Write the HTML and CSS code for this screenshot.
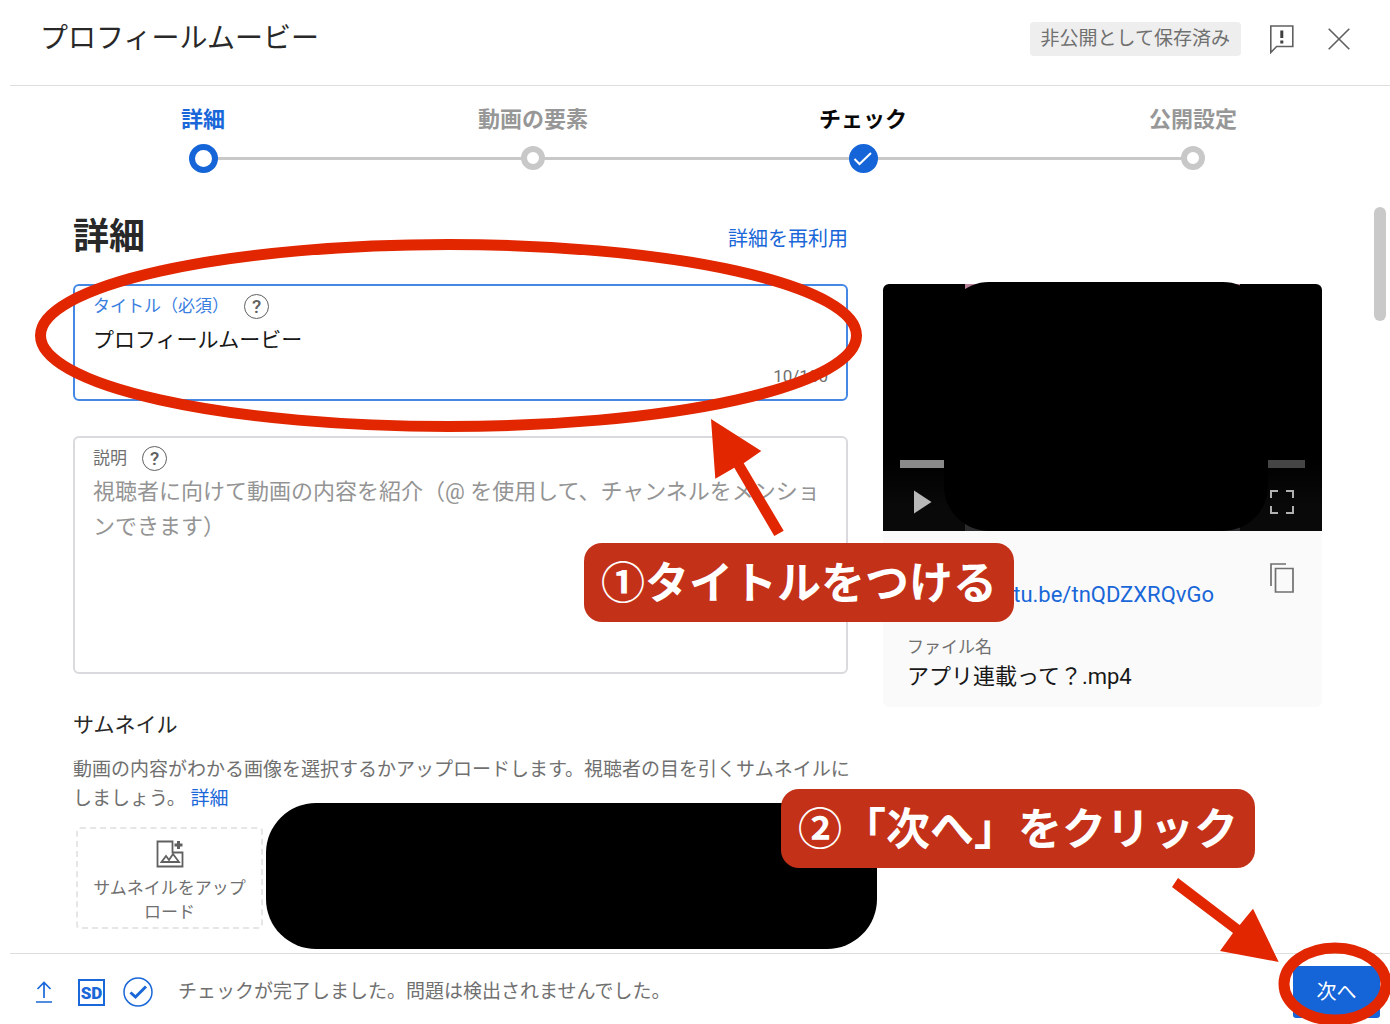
FILE: index.html
```html
<!DOCTYPE html>
<html lang="ja">
<head>
<meta charset="utf-8">
<meta name="viewport" content="width=device-width, initial-scale=1">
<title>プロフィールムービー</title>
<link rel="stylesheet" href="styles.css">
</head>
<body>
<div class="dialog">
  <header class="header">
    <h1 class="header-title">プロフィールムービー</h1>
    <span class="saved">非公開として保存済み</span>
    <button class="icon-btn" aria-label="フィードバックを送信">
      <svg width="26" height="30" viewBox="0 0 26 30" fill="none" stroke="#606060" stroke-width="1.6"><path d="M1.800 2h22v20.500h-16.200l-5.800 6z"/><path d="M12.800 6.500v7.500M12.800 16.500v3" stroke="#404040" stroke-width="3"/></svg>
    </button>
    <button class="icon-btn" aria-label="閉じる">
      <svg width="22" height="22" viewBox="0 0 22 22" fill="none" stroke="#606060" stroke-width="1.600"><path d="M.7.7l20.600 20.600M21.300.7L.7 21.300"/></svg>
    </button>
  </header>

  <nav class="steps" aria-label="手順">
    <button class="step step-active"><span>詳細</span><i class="dot"></i></button>
    <button class="step"><span>動画の要素</span><i class="dot"></i></button>
    <button class="step step-done"><span>チェック</span><i class="dot"><svg width="20" height="16" viewBox="0 0 20 16" fill="none" stroke="#fff" stroke-width="2"><path d="M1.500 8l5 5L18 2"/></svg></i></button>
    <button class="step"><span>公開設定</span><i class="dot"></i></button>
  </nav>

  <main class="body">
    <section class="main-col">
      <div class="heading">
        <h2>詳細</h2>
        <button class="reuse">詳細を再利用</button>
      </div>

      <div class="field field-title">
        <div class="field-label"><label for="title">タイトル（必須）</label><button class="help" aria-label="タイトルのヘルプ">?</button></div>
        <input id="title" class="field-input" type="text" value="プロフィールムービー" maxlength="100">
        <div class="counter">10/100</div>
        <svg class="mark mark-title" viewBox="0 0 827 193" preserveAspectRatio="none"><ellipse cx="413.500" cy="96.500" rx="408" ry="91"/></svg>
      </div>

      <div class="field field-desc">
        <div class="field-label"><label for="desc">説明</label><button class="help" aria-label="説明のヘルプ">?</button></div>
        <textarea id="desc" class="field-input" rows="5" placeholder="視聴者に向けて動画の内容を紹介（@ を使用して、チャンネルをメンションできます）"></textarea>
        <svg class="arrow arrow-title" width="74" height="118" viewBox="0 0 74 118"><path d="M0 0L50.300 32L32.700 44.300L72.700 111.700L63.300 117L23.300 48.700L4.300 59.700z"/></svg>
        <div class="callout callout-title">①タイトルをつける</div>
      </div>

      <h3 class="thumb-title">サムネイル</h3>
      <p class="thumb-text">動画の内容がわかる画像を選択するかアップロードします。視聴者の目を引くサムネイルに<br>しましょう。 <a href="#">詳細</a></p>
      <div class="thumbs">
        <button class="upload">
          <svg width="28" height="28" viewBox="0 0 28 28" fill="none" stroke="#606060" stroke-width="1.800"><path d="M16.500 1.500H1.500v25h25V12.500H16.500z"/><path d="M5.500 22l4.500-6 3 4 4-6 6 8z"/><path d="M22.500 1v8M18.500 5h8" stroke-width="3"/></svg>
          <span>サムネイルをアップロード</span>
        </button>
        <div class="cover cover-thumbs"></div>
        <div class="callout callout-next">②「次へ」をクリック</div>
      </div>
    </section>

    <aside class="preview">
      <div class="player">
        <div class="frame"></div>
        <div class="cover cover-player"></div>
        <div class="controls">
          <div class="track"><i class="played"></i><i class="rest"></i></div>
          <div class="buttons">
            <button class="ctl" aria-label="再生"><svg width="18" height="24" viewBox="0 0 18 24"><path d="M0 .5v23L17.500 12z" fill="#b8b8b8"/></svg></button>
            <button class="ctl" aria-label="全画面"><svg width="24" height="24" viewBox="0 0 24 24" fill="none" stroke="#b0b0b0" stroke-width="2"><path d="M1 8V1h7M16 1h7v7M23 16v7h-7M8 23H1v-7"/></svg></button>
          </div>
        </div>
      </div>
      <div class="info">
        <div class="link-row">
          <a href="#">https://youtu.be/tnQDZXRQvGo</a>
          <button class="ctl" aria-label="リンクをコピー"><svg width="24" height="30" viewBox="0 0 24 30" fill="none" stroke="#707070" stroke-width="1.700"><path d="M16 1H1v22"/><path d="M5.500 5.500h17.500v23.500H5.500z"/></svg></button>
        </div>
        <div class="file-label">ファイル名</div>
        <div class="file-name">アプリ連載って？.mp4</div>
      </div>
    </aside>
    <i class="scroll-thumb"></i>
  </main>

  <footer class="footer">
    <svg width="18" height="22" viewBox="0 0 18 22" fill="none" stroke="#1967d8" stroke-width="1.700"><path d="M1 21h16M9 17V1.500M2.500 8L9 1.500 15.500 8"/></svg>
    <span class="sd">SD</span>
    <svg width="30" height="30" viewBox="0 0 30 30" fill="none" stroke="#1967d8"><circle cx="15" cy="15" r="14" stroke-width="1.500"/><path d="M7.500 15.500l5 4.500L23 9.500" stroke-width="3"/></svg>
    <p class="status">チェックが完了しました。問題は検出されませんでした。</p>
    <div class="next-wrap">
      <button class="next">次へ</button>
      <svg class="mark mark-next" width="114" height="84" viewBox="0 0 114 84"><ellipse cx="57" cy="42" rx="51" ry="36"/></svg>
      <svg class="arrow arrow-next" width="107" height="84" viewBox="0 0 107 84"><path d="M6 0L67.700 47L81 30.700L106.700 84L48 73L61 55L0 9z"/></svg>
    </div>
  </footer>
</div>
</body>
</html>
```
FILE: styles.css
```css
* { box-sizing: border-box; }

body {
  margin: 0;
  background: #fff;
  color: #282828;
  font-family: Roboto, "Noto Sans CJK JP", sans-serif;
  font-size: 22px;
  line-height: 32px;
}

h1, h2, h3, p { margin: 0; font-weight: 400; }
button { margin: 0; padding: 0; border: 0; background: none; font: inherit; color: inherit; cursor: pointer; }
svg { display: block; flex: none; }
a { color: #1967d8; text-decoration: none; }

.dialog { display: flex; flex-direction: column; min-height: 100vh; margin-left: 10px; overflow: hidden; }

.header {
  display: flex;
  align-items: center;
  height: 86px;
  padding: 0 40px 8px 30px;
  border-bottom: 1px solid #dedede;
}
.header-title { flex: 1; font-size: 28px; line-height: 40px; }
.saved { padding: 0 11px; border-radius: 4px; background: #eee; color: #707070; font-size: 19px; line-height: 34px; }
.icon-btn { margin-left: 28px; }
.icon-btn + .icon-btn { margin-left: 33px; }

.steps { display: grid; grid-template-columns: repeat(4, 1fr); padding: 18px 32px 0 28px; }
.step {
  position: relative;
  display: flex;
  flex-direction: column;
  align-items: center;
  gap: 8px;
  color: #979797;
  font-weight: 700;
}
.step + .step::before {
  content: "";
  position: absolute;
  right: 50%;
  bottom: 13px;
  width: 100%;
  height: 3px;
  background: #c8c8c8;
}
.dot {
  position: relative;
  z-index: 1;
  display: flex;
  align-items: center;
  justify-content: center;
  width: 24px;
  height: 24px;
  margin: 2px 0 3px;
  border: 6px solid #c8c8c8;
  border-radius: 50%;
  background: #fff;
}
.step-active { color: #1967d8; }
.step-active .dot, .step-done .dot { width: 29px; height: 29px; margin: 0; border-color: #1565d8; }
.step-done { color: #080808; }
.step-done .dot { background: #1565d8; }

.body {
  position: relative;
  flex: 1;
  display: grid;
  grid-template-columns: minmax(0, 775fr) minmax(0, 439fr);
  align-items: start;
  gap: 35px;
  padding: 40px 68px 24px 63px;
}
.heading { display: flex; align-items: center; justify-content: space-between; height: 48px; margin-bottom: 23px; }
.heading h2 { font-size: 36px; line-height: 48px; font-weight: 700; }
.reuse { padding-top: 4px; color: #1967d8; font-size: 20px; }

.field { position: relative; padding: 7px 18px; border: 2px solid #d9d9de; border-radius: 6px; }
.field-title { height: 117px; border-color: #4488e4; }
.field-desc { height: 238px; margin-top: 35px; }
.field-label { display: flex; align-items: center; gap: 15px; color: #707070; font-size: 17px; line-height: 27px; }
.field-title .field-label { color: #3a7ee0; }
.help {
  width: 25px;
  height: 25px;
  border: 1px solid #606060;
  border-radius: 50%;
  color: #606060;
  font-size: 19px;
  line-height: 23px;
  font-weight: 500;
}
.field-input {
  display: block;
  width: 100%;
  padding: 0;
  border: 0;
  outline: 0;
  resize: none;
  overflow: hidden;
  background: none;
  color: #181818;
  font: inherit;
  line-height: 35px;
}
.field-desc .field-input { margin-top: 2px; }
.field-input::placeholder { color: #949494; }
.field-title .field-input { height: 36px; font-size: 21px; }
.counter { padding-top: 4px; color: #707070; font-size: 17px; text-align: right; }

.thumb-title { margin-top: 35px; font-size: 21px; }
.thumb-text { margin-top: 14px; color: #707070; font-size: 19px; line-height: 29px; white-space: nowrap; }
.thumbs { position: relative; margin-top: 14px; padding-left: 3px; }
.upload {
  display: flex;
  flex-direction: column;
  align-items: center;
  gap: 8px;
  width: 187px;
  padding: 11px 14px 3px;
  border: 2px dashed #e6e6e6;
  border-radius: 4px;
  color: #707070;
  font-size: 17px;
  line-height: 24px;
}

.preview { margin-top: 71px; }
.player { position: relative; display: flex; flex-direction: column; justify-content: flex-end; aspect-ratio: 16 / 9; border-radius: 6px 6px 0 0; background: linear-gradient(#000 70%, #090909 90%); }
.frame { position: absolute; top: 0; bottom: 0; left: 82px; right: 82px; background: linear-gradient(#b8839a, #2a2a2c); }
.controls { position: relative; padding: 0 17px 17px; }
.track { display: flex; justify-content: space-between; height: 8px; margin-bottom: 22px; }
.played { width: 44px; background: #8a8a8a; }
.rest { width: 37px; background: #454545; }
.buttons { display: flex; justify-content: space-between; padding: 0 11px 0 14px; }
.ctl { line-height: 0; }
.info { padding: 32px 28px 14px 24px; border-radius: 0 0 6px 6px; background: #fafafa; }
.link-row { display: flex; align-items: flex-start; justify-content: space-between; }
.link-row a { padding-top: 16px; }
.file-label { margin-top: 23px; color: #707070; font-size: 17px; line-height: 26px; }
.file-name { padding-top: 1px; color: #181818; }

.scroll-thumb { position: absolute; top: 34px; right: 4px; width: 12px; height: 114px; border-radius: 6px; background: #c9c9c9; }

.footer {
  display: flex;
  align-items: center;
  padding: 12px 10px 6px 25px;
  border-top: 1px solid #dedede;
}
.sd {
  width: 27px;
  height: 27px;
  margin: 0 18px 0 25px;
  border: 2px solid #1967d8;
  color: #1967d8;
  font-size: 17px;
  line-height: 24px;
  font-weight: 900;
  text-align: center;
}
.status { flex: 1; padding-left: 25px; color: #707070; font-size: 19px; }
.next-wrap { position: relative; }
.next { display: block; width: 87px; height: 52px; border-radius: 3px; background: #1565d8; color: #fff; font-size: 20px; }

/* Tutorial annotations drawn over the dialog */
.mark, .arrow, .callout, .cover { position: absolute; pointer-events: none; }
.mark { fill: none; stroke: #e22600; stroke-width: 11px; overflow: visible; }
.mark ellipse { vector-effect: non-scaling-stroke; }
.arrow { z-index: 2; fill: #e22600; }
.callout {
  z-index: 3;
  padding: 4px 17px 0;
  border-radius: 18px;
  background: #c43119;
  color: #fff;
  font-size: 44px;
  line-height: 75px;
  font-weight: 700;
  white-space: nowrap;
}
.cover { background: #000; }
.mark-title { top: -47px; left: -40px; width: calc(100% + 56px); height: 193px; z-index: 1; }
.arrow-title { top: -19px; right: 61px; }
.callout-title { top: 105px; right: -168px; }
.cover-thumbs { top: -24px; left: 193px; right: -29px; height: 146px; border-radius: 50px; }
.callout-next { top: -38px; right: -407px; }
.cover-player { top: -2px; bottom: 0; left: 61px; right: 54px; border-radius: 45px; }
.mark-next { top: -24px; right: -12px; }
.arrow-next { top: -88px; right: 101px; }
```
